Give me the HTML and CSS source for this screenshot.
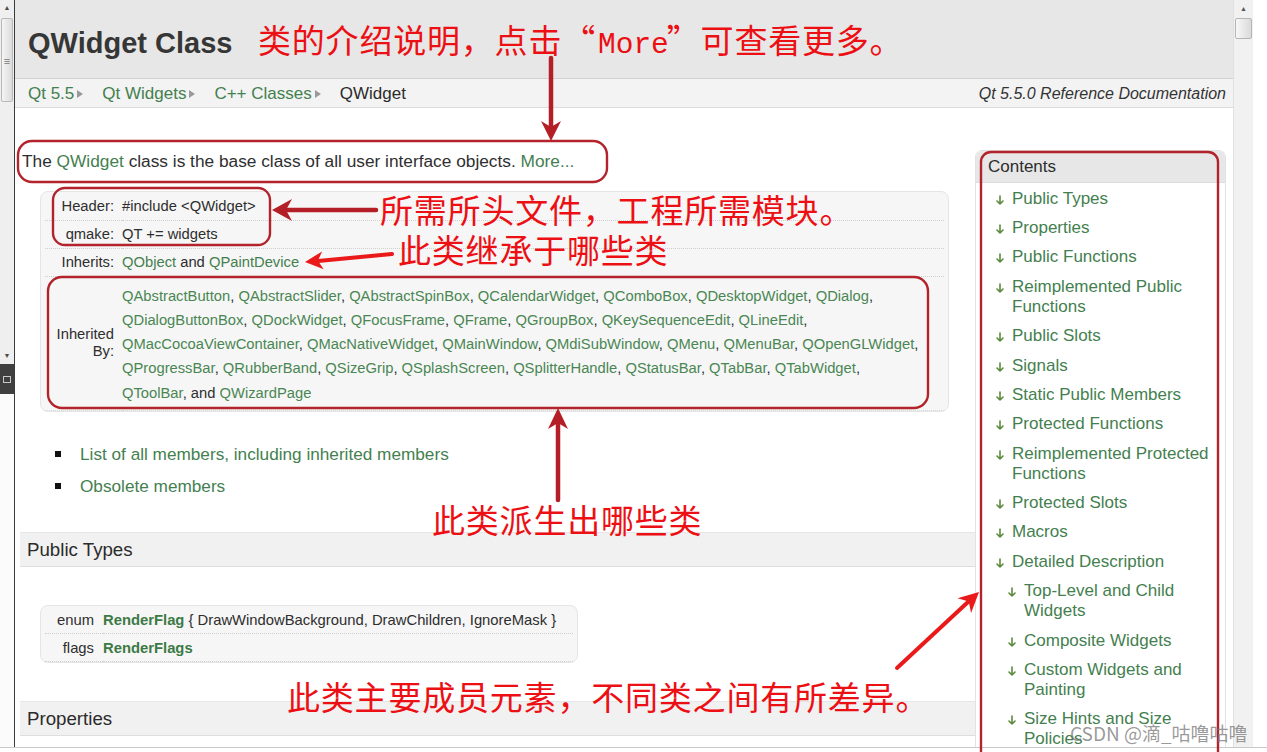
FILE: index.html
```html
<!DOCTYPE html>
<html lang="zh-CN">
<head>
<meta charset="utf-8">
<title>QWidget Class | Qt Widgets 5.5</title>
<link rel="stylesheet" href="styles.css">
</head>
<body>
<div class="stage">
  <div class="window">
    <div class="lstrip">
      <div class="ls-arrow">&#9650;</div>
      <div class="ls-thumb">&#8801;</div>
      <div class="ls-track"></div>
      <div class="ls-arrow">&#9660;</div>
      <div class="ls-block"><span class="ls-icon"></span></div>
      <div class="ls-rest"></div>
    </div>

    <div class="page">
      <header class="titlebar">
        <h1 class="title">QWidget Class</h1>
      </header>
      <nav class="crumbs">
        <div class="crumb-list">
          <a class="crumb">Qt 5.5</a><span class="tri"></span>
          <a class="crumb">Qt Widgets</a><span class="tri"></span>
          <a class="crumb">C++ Classes</a><span class="tri"></span>
          <span class="crumb current">QWidget</span>
        </div>
        <span class="docver">Qt 5.5.0 Reference Documentation</span>
      </nav>

      <div class="content">
        <main class="main">
          <p class="intro">The <a class="lnk">QWidget</a> class is the base class of all user interface objects. <a class="lnk">More...</a></p>

          <div class="infobox">
            <table class="info">
              <tr><td class="lbl">Header:</td><td class="val">#include &lt;QWidget&gt;</td></tr>
              <tr><td class="lbl">qmake:</td><td class="val">QT += widgets</td></tr>
              <tr><td class="lbl">Inherits:</td><td class="val"><a class="lnk">QObject</a> and <a class="lnk">QPaintDevice</a></td></tr>
              <tr class="inh"><td class="lbl">Inherited By:</td><td class="val"><a class="lnk">QAbstractButton</a>, <a class="lnk">QAbstractSlider</a>, <a class="lnk">QAbstractSpinBox</a>, <a class="lnk">QCalendarWidget</a>, <a class="lnk">QComboBox</a>, <a class="lnk">QDesktopWidget</a>, <a class="lnk">QDialog</a>,<br><a class="lnk">QDialogButtonBox</a>, <a class="lnk">QDockWidget</a>, <a class="lnk">QFocusFrame</a>, <a class="lnk">QFrame</a>, <a class="lnk">QGroupBox</a>, <a class="lnk">QKeySequenceEdit</a>, <a class="lnk">QLineEdit</a>,<br><a class="lnk">QMacCocoaViewContainer</a>, <a class="lnk">QMacNativeWidget</a>, <a class="lnk">QMainWindow</a>, <a class="lnk">QMdiSubWindow</a>, <a class="lnk">QMenu</a>, <a class="lnk">QMenuBar</a>, <a class="lnk">QOpenGLWidget</a>,<br><a class="lnk">QProgressBar</a>, <a class="lnk">QRubberBand</a>, <a class="lnk">QSizeGrip</a>, <a class="lnk">QSplashScreen</a>, <a class="lnk">QSplitterHandle</a>, <a class="lnk">QStatusBar</a>, <a class="lnk">QTabBar</a>, <a class="lnk">QTabWidget</a>,<br><a class="lnk">QToolBar</a>, and <a class="lnk">QWizardPage</a></td></tr>
            </table>
          </div>

          <ul class="links">
            <li><a class="lnk">List of all members, including inherited members</a></li>
            <li><a class="lnk">Obsolete members</a></li>
          </ul>

          <h2 class="sec">Public Types</h2>

          <div class="typesbox">
            <table class="types">
              <tr><td class="tlbl">enum</td><td class="tval"><a class="lnk strong">RenderFlag</a> { DrawWindowBackground, DrawChildren, IgnoreMask }</td></tr>
              <tr><td class="tlbl">flags</td><td class="tval"><a class="lnk strong">RenderFlags</a></td></tr>
            </table>
          </div>

          <h2 class="sec">Properties</h2>
        </main>

        <aside class="toc">
          <div class="toc-head">Contents</div>
          <ul class="toc-list">
            <li><svg class="darr" viewBox="0 0 8 10"><path d="M4 1V9M1 6L4 9L7 6"/></svg><a class="lnk">Public Types</a></li>
            <li><svg class="darr" viewBox="0 0 8 10"><path d="M4 1V9M1 6L4 9L7 6"/></svg><a class="lnk">Properties</a></li>
            <li><svg class="darr" viewBox="0 0 8 10"><path d="M4 1V9M1 6L4 9L7 6"/></svg><a class="lnk">Public Functions</a></li>
            <li><svg class="darr" viewBox="0 0 8 10"><path d="M4 1V9M1 6L4 9L7 6"/></svg><a class="lnk">Reimplemented Public<br>Functions</a></li>
            <li><svg class="darr" viewBox="0 0 8 10"><path d="M4 1V9M1 6L4 9L7 6"/></svg><a class="lnk">Public Slots</a></li>
            <li><svg class="darr" viewBox="0 0 8 10"><path d="M4 1V9M1 6L4 9L7 6"/></svg><a class="lnk">Signals</a></li>
            <li><svg class="darr" viewBox="0 0 8 10"><path d="M4 1V9M1 6L4 9L7 6"/></svg><a class="lnk">Static Public Members</a></li>
            <li><svg class="darr" viewBox="0 0 8 10"><path d="M4 1V9M1 6L4 9L7 6"/></svg><a class="lnk">Protected Functions</a></li>
            <li><svg class="darr" viewBox="0 0 8 10"><path d="M4 1V9M1 6L4 9L7 6"/></svg><a class="lnk">Reimplemented Protected<br>Functions</a></li>
            <li><svg class="darr" viewBox="0 0 8 10"><path d="M4 1V9M1 6L4 9L7 6"/></svg><a class="lnk">Protected Slots</a></li>
            <li><svg class="darr" viewBox="0 0 8 10"><path d="M4 1V9M1 6L4 9L7 6"/></svg><a class="lnk">Macros</a></li>
            <li><svg class="darr" viewBox="0 0 8 10"><path d="M4 1V9M1 6L4 9L7 6"/></svg><a class="lnk">Detailed Description</a></li>
            <li class="sub"><svg class="darr" viewBox="0 0 8 10"><path d="M4 1V9M1 6L4 9L7 6"/></svg><a class="lnk">Top-Level and Child<br>Widgets</a></li>
            <li class="sub"><svg class="darr" viewBox="0 0 8 10"><path d="M4 1V9M1 6L4 9L7 6"/></svg><a class="lnk">Composite Widgets</a></li>
            <li class="sub"><svg class="darr" viewBox="0 0 8 10"><path d="M4 1V9M1 6L4 9L7 6"/></svg><a class="lnk">Custom Widgets and<br>Painting</a></li>
            <li class="sub"><svg class="darr" viewBox="0 0 8 10"><path d="M4 1V9M1 6L4 9L7 6"/></svg><a class="lnk">Size Hints and Size<br>Policies</a></li>
          </ul>
        </aside>
      </div>
    </div>

    <div class="rscroll">
      <div class="rs-arrow">&#9650;</div>
      <div class="rs-thumb"></div>
    </div>
  </div>

  <!-- annotation layer drawn over the page -->
  <svg class="marks" viewBox="0 0 1267 752" width="1267" height="752">
    <g class="box">
      <rect x="18" y="141" width="589" height="41" rx="14"/>
      <rect x="53" y="188" width="217" height="57" rx="12"/>
      <rect x="48" y="277" width="880" height="131" rx="14"/>
      <rect x="981" y="152" width="237" height="640" rx="10"/>
    </g>
    <g class="dark">
      <line x1="551" y1="58" x2="551" y2="128"/>
      <polygon points="551,141 541,121 551,127 561,121"/>
      <line x1="376" y1="210" x2="285" y2="210"/>
      <polygon points="272,210 292,199 286,210 292,221"/>
      <line x1="558" y1="500" x2="558" y2="420"/>
      <polygon points="558,408 568,429 558,423 548,429"/>
    </g>
    <g class="bright">
      <line x1="392" y1="254" x2="318" y2="261"/>
      <polygon points="305,262 323.7,269.3 317.9,260.8 322.1,251.4"/>
      <line x1="897" y1="668" x2="968" y2="602"/>
      <polygon points="979,592 971.1,612.9 968.7,601.5 957.5,598.3"/>
    </g>
  </svg>

  <div class="note n1">类的介绍说明，点击“<span class="mono">More</span>”可查看更多。</div>
  <div class="note n2">所需所头文件，工程所需模块。</div>
  <div class="note n3">此类继承于哪些类</div>
  <div class="note n4">此类派生出哪些类</div>
  <div class="note n5">此类主要成员元素，不同类之间有所差异。</div>
  <div class="watermark">CSDN @滴_咕噜咕噜</div>
</div>
</body>
</html>
```

FILE: styles.css
```css
* { box-sizing: border-box; }

html, body {
  margin: 0;
  padding: 0;
  background: #ffffff;
}

body {
  font-family: "Liberation Sans", Arial, "Noto Sans CJK SC", sans-serif;
  color: #333333;
}

.stage {
  position: relative;
  width: 1267px;
  height: 752px;
  overflow: hidden;
}

.window {
  display: flex;
  height: 748px;
  border-bottom: 1px solid #c9c9c9;
  overflow: hidden;
}

/* left window edge (neighbouring scrollbar) */
.lstrip {
  width: 15px;
  flex: none;
  display: flex;
  flex-direction: column;
  background: #efefef;
  border-right: 1px solid #3b3b3b;
}
.ls-arrow {
  height: 16px;
  font-size: 7px;
  line-height: 16px;
  text-align: center;
  color: #4a4a4a;
}
.ls-thumb {
  height: 84px;
  margin: 2px 1px 0 1px;
  border: 1px solid #b9b9b9;
  border-radius: 2px;
  background: linear-gradient(to right, #f4f4f4, #dcdcdc);
  font-size: 11px;
  line-height: 84px;
  text-align: center;
  color: #777;
}
.ls-track { height: 246px; }
.ls-block {
  height: 30px;
  background: #3f3f3f;
  display: flex;
  align-items: center;
  justify-content: center;
}
.ls-icon {
  width: 8px;
  height: 7px;
  border: 1px solid #c8c8c8;
}
.ls-rest {
  flex: 1;
  background: #fbfbfb;
}

/* main page */
.page {
  width: 1218px;
  flex: none;
  display: flex;
  flex-direction: column;
  background: #ffffff;
  overflow: hidden;
}

.titlebar {
  height: 79px;
  flex: none;
  background: #e7e7e7;
  border-bottom: 1px solid #d2d2d2;
}
.title {
  margin: 0;
  padding: 8px 0 0 13px;
  font-size: 29px;
  line-height: 70px;
  font-weight: bold;
  color: #363636;
}

.crumbs {
  height: 29px;
  flex: none;
  display: flex;
  justify-content: space-between;
  align-items: center;
  padding: 1px 7px 0 13px;
  background: #f3f3f3;
  border-bottom: 1px solid #dcdcdc;
  font-size: 17px;
}
.crumb-list {
  display: flex;
  align-items: center;
}
.crumb { color: #44804f; }
.crumb.current { color: #2b2b2b; }
.tri {
  width: 0;
  height: 0;
  margin: 1px 19px 0 3px;
  border-left: 6px solid #9a9a9a;
  border-top: 4px solid transparent;
  border-bottom: 4px solid transparent;
}
.docver {
  font-size: 16px;
  font-style: italic;
  color: #333;
}

.lnk { color: #44804f; text-decoration: none; }
.lnk.strong { font-weight: bold; color: #3c7a45; }

.content {
  flex: 1;
  display: flex;
  align-items: flex-start;
}

.main {
  width: 960px;
  flex: none;
}

.intro {
  margin: 43px 0 0 7px;
  font-size: 17.3px;
  line-height: 20px;
  color: #2f2f2f;
}

.infobox {
  margin: 20px 0 0 25px;
  width: 909px;
  background: #f6f6f6;
  border: 1px solid #e5e5e5;
  border-radius: 8px;
  padding: 0 4px;
}
.info {
  width: 100%;
  border-collapse: collapse;
  font-size: 14.75px;
  color: #2e2e2e;
}
.info td {
  border-bottom: 1px dotted #cfcfcf;
  vertical-align: middle;
  height: 28px;
  padding: 0;
}
.info tr:last-child td { border-bottom: 1px dotted #d8d8d8; }
.info .lbl {
  width: 77px;
  padding-right: 8px;
  text-align: right;
  white-space: nowrap;
}
.info .val { padding-left: 0; }
.info .inh .lbl {
  white-space: normal;
  line-height: 17px;
}
.info .inh .val {
  padding: 7px 0 5px 0;
  line-height: 24.3px;
  white-space: nowrap;
}
.info .inh .val .lnk { color: #4a8653; }

.links {
  list-style: none;
  margin: 32px 0 0 0;
  padding: 0 0 0 40px;
  font-size: 17.2px;
  line-height: 20px;
}
.links li {
  display: flex;
  align-items: center;
  margin-bottom: 12px;
}
.links li:last-child { margin-bottom: 0; }
.links li::before {
  content: "";
  width: 6px;
  height: 6px;
  margin-right: 19px;
  background: #111;
  flex: none;
}

.sec {
  margin: 36px 0 0 5px;
  height: 35px;
  padding: 0 0 0 7px;
  background: #f1f1f1;
  border-top: 1px solid #e6e6e6;
  border-bottom: 1px solid #dedede;
  font-size: 18.7px;
  font-weight: normal;
  line-height: 33px;
  color: #2b2b2b;
}

.typesbox {
  margin: 38px 0 0 25px;
  width: 538px;
  background: #f6f6f6;
  border: 1px solid #e5e5e5;
  border-radius: 8px;
  padding: 0 4px;
}
.types {
  border-collapse: collapse;
  width: 100%;
  font-size: 14.8px;
  color: #2e2e2e;
}
.types td {
  height: 28px;
  padding: 0;
  border-bottom: 1px dotted #cfcfcf;
  white-space: nowrap;
}
.types .tlbl {
  width: 58px;
  text-align: right;
  padding-right: 9px;
}
.typesbox + .sec { margin-top: 38px; }

/* contents sidebar */
.toc {
  width: 251px;
  flex: none;
  margin-top: 42px;
  background: #ffffff;
  border: 1px solid #e2e2e2;
  border-radius: 7px 7px 0 0;
  overflow: hidden;
}
.toc-head {
  height: 32px;
  padding-left: 12px;
  background: #e7e7e7;
  border-bottom: 1px solid #dddddd;
  font-size: 17px;
  line-height: 31px;
  color: #2d2d2d;
}
.toc-list {
  list-style: none;
  margin: 0;
  padding: 1px 0 0 20px;
  font-size: 17px;
  line-height: 20px;
}
.toc-list li {
  display: flex;
  align-items: flex-start;
  padding: 4.7px 0;
}
.toc-list li.sub { padding-left: 12px; }
.darr {
  width: 8px;
  height: 10px;
  flex: none;
  margin: 6px 8px 0 0;
  fill: none;
  stroke: #5a8a3c;
  stroke-width: 1.6;
  stroke-linecap: round;
  stroke-linejoin: round;
}

/* right scrollbar */
.rscroll {
  width: 20px;
  flex: none;
  background: #f1f1f1;
  border-left: 1px solid #e0e0e0;
  display: flex;
  flex-direction: column;
  align-items: center;
}
.rs-arrow {
  height: 18px;
  font-size: 7px;
  line-height: 18px;
  color: #555;
}
.rs-thumb {
  width: 17px;
  height: 21px;
  border: 1px solid #b5b5b5;
  border-radius: 2px;
  background: linear-gradient(to right, #f7f7f7, #dadada);
}

/* annotations */
.marks {
  position: absolute;
  left: 0;
  top: 0;
  pointer-events: none;
}
.marks .box rect {
  fill: none;
  stroke: #b3232b;
  stroke-width: 2.4;
}
.marks .dark line {
  stroke: #b41f27;
  stroke-width: 4.5;
  stroke-linecap: round;
}
.marks .dark polygon { fill: #b41f27; }
.marks .bright line {
  stroke: #ea1a1a;
  stroke-width: 4;
  stroke-linecap: round;
}
.marks .bright polygon { fill: #ea1a1a; }

.note {
  position: absolute;
  font-family: "Noto Sans CJK SC", sans-serif;
  font-size: 33px;
  line-height: 33px;
  letter-spacing: 0.8px;
  color: #ec0f14;
  white-space: nowrap;
}
.note .mono {
  font-family: "Liberation Mono", "DejaVu Sans Mono", monospace;
  font-size: 29.5px;
  letter-spacing: 0;
  margin: 0 -2px 0 2px;
}
.n1 { left: 258px; top: 23px; }
.n2 { left: 380px; top: 193px; }
.n3 { left: 398px; top: 233px; }
.n4 { left: 432px; top: 503px; }
.n5 { left: 287px; top: 680px; }

.watermark {
  position: absolute;
  left: 1070px;
  top: 721px;
  font-family: "Noto Sans CJK SC", sans-serif;
  font-size: 19px;
  line-height: 24px;
  color: rgba(120, 120, 120, 0.75);
  white-space: nowrap;
}
```
